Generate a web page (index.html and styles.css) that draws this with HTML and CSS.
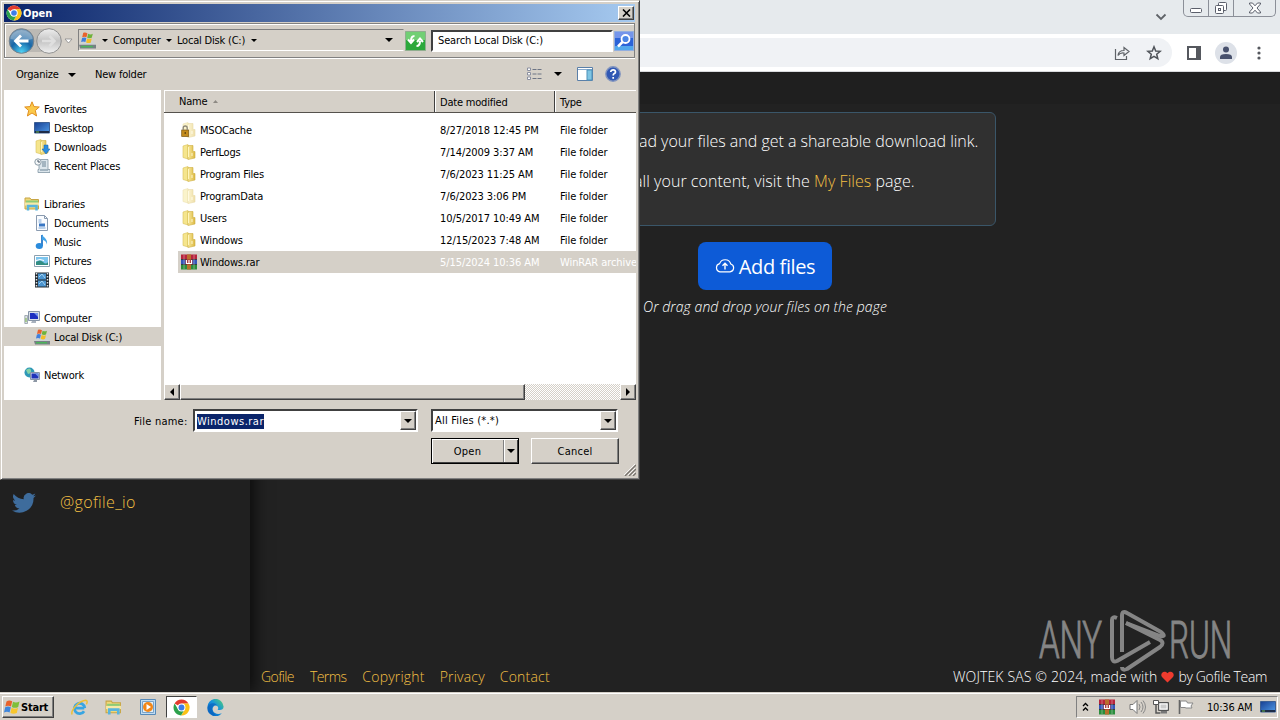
FILE: index.html
```html
<!DOCTYPE html>
<html lang="en">
<head>
  <meta charset="UTF-8">
  <title>Gofile - Open</title>
  <link rel="stylesheet" href="styles.css">
</head>
<body>
  <svg class="sprite" aria-hidden="true">
    <defs>
      <linearGradient id="gFolder" x1="0" x2="1"><stop offset="0" stop-color="#f8e89a"/><stop offset="1" stop-color="#dcb944"/></linearGradient>
      <linearGradient id="gScreen" x1="0" y1="0" x2="1" y2="1"><stop offset="0" stop-color="#173f92"/><stop offset="1" stop-color="#4f9be8"/></linearGradient>
      <radialGradient id="gBack" cx=".5" cy=".95" r=".9"><stop offset="0" stop-color="#4fd3f5"/><stop offset=".5" stop-color="#1767a8"/><stop offset="1" stop-color="#6d94b5"/></radialGradient>
      <linearGradient id="gFwd" x1="0" y1="0" x2="0" y2="1"><stop offset="0" stop-color="#eee"/><stop offset=".5" stop-color="#c4c4c4"/><stop offset="1" stop-color="#f1f1f1"/></linearGradient>
      <linearGradient id="gEdge" x1="0" y1="1" x2="1" y2="0"><stop offset="0" stop-color="#0b5fc0"/><stop offset=".55" stop-color="#1593dd"/><stop offset="1" stop-color="#55d36b"/></linearGradient>
    </defs>
    <symbol id="chrome" viewBox="0 0 16 16">
      <circle cx="8" cy="8" r="7.500" fill="#fff"/>
      <path d="M8 8 1.500 4.200A7.500 7.500 0 0 1 14.500 4.200L8 4.400Z" fill="#e33b2e"/>
      <path d="M14.500 4.200A7.500 7.500 0 0 1 7.600 15.500L11.200 9.800 9 4.200Z" fill="#fbc116"/>
      <path d="M1.500 4.200A7.500 7.500 0 0 0 7.600 15.500L10.600 10.400 5 10Z" fill="#2da14c"/>
      <circle cx="8" cy="8" r="3.700" fill="#fff"/><circle cx="8" cy="8" r="2.800" fill="#3d7de8"/>
    </symbol>
    <symbol id="flag" viewBox="0 0 16 16">
      <path d="M2.500 2.500Q5 .5 8.200 2.200L7 7.500Q4 6 1.300 7.500Z" fill="#e8622c"/><path d="M9 2.800Q12 4.500 15.500 2.500L14.200 8Q11 9.700 7.800 8Z" fill="#7fbf3a"/>
      <path d="M1.200 8.300Q4 6.800 6.800 8.300L5.600 13.500Q3 12 0 13.500Z" fill="#3f86dc"/><path d="M7.600 8.800Q11 10.500 14 8.800L12.800 14Q9.500 15.500 6.400 14Z" fill="#f8c62d"/>
    </symbol>
    <symbol id="disk" viewBox="0 0 16 16">
      <path d="M2.500 9h11L16 12H0Z" fill="#cdd2d4"/><path d="M0 12h16v3.500H1Z" fill="#768084"/><path d="M2 13h11v1.500H2Z" fill="#4bb45b"/>
      <path d="M4 .8Q6 0 8 1.300L7 5Q5 4 3 5Z" fill="#e8622c"/><path d="M8.600 1.700Q11 3 13 1.700L12 5.500Q10 6.500 7.700 5.300Z" fill="#6fb33a"/>
      <path d="M2.900 5.600Q5 4.500 6.900 5.700L6 9.500Q4 8.500 2 9.500Z" fill="#3f7fdc"/><path d="M7.600 6Q10 7.200 12 6.200L11 10Q9 11 6.700 9.800Z" fill="#f2bd27"/>
    </symbol>
    <symbol id="star" viewBox="0 0 16 16"><path d="M8 .8 10 5.600 15.300 6 11.300 9.500 12.600 15 8 12 3.400 15 4.700 9.500.7 6 6 5.600Z" fill="#fbc94a" stroke="#e08f22"/></symbol>
    <symbol id="screen" viewBox="0 0 16 16"><path d="M.5 2.500h15v10.500h-15Z" fill="url(#gScreen)" stroke="#3c5f93"/><path d="M1 11h14v2H1Z" fill="#1d2c48"/><path d="M2 11.500h3v1H2Z" fill="#68b552"/></symbol>
    <symbol id="folder" viewBox="0 0 16 16"><path d="M2 2 7 .5V15L2 13.500Z" fill="#f5e58d" stroke="#d9bf58" stroke-width=".6"/><path d="M7 1.500h5v6H14v6.500L7 15.500Z" fill="url(#gFolder)" stroke="#cfae42" stroke-width=".6"/><path d="M7.500 3v10" stroke="#fff6bd"/><path d="M11 9v3" stroke="#fff8d0"/></symbol>
    <symbol id="lockfolder" viewBox="0 0 16 16"><use href="#folder" opacity=".45"/><rect x=".7" y="8" width="7" height="6.500" fill="#c38b1c" stroke="#7d5713" stroke-width=".7"/><path d="M2.200 8V6a2 2 0 0 1 4 0v2" fill="none" stroke="#8e8878" stroke-width="1.300"/><path d="M4.200 10v2" stroke="#47340e"/></symbol>
    <symbol id="downloads" viewBox="0 0 16 16"><use href="#folder"/><path d="M10 6h4v4h2l-4 5-4-5h2Z" fill="#2b8de0" stroke="#1460ad" stroke-width=".5"/></symbol>
    <symbol id="recent" viewBox="0 0 16 16"><path d="M5 1.500h9v10h2v3H4v-3h1Z" fill="#dce6ec" stroke="#8296a3" stroke-width=".8"/><path d="M8 4h4M8 6h4M8 8h4M6 12h8" stroke="#6c8495"/><circle cx="4" cy="4" r="3.200" fill="#f4f7f8" stroke="#8c9ca8"/><path d="M4 2v2h2" fill="none" stroke="#456"/></symbol>
    <symbol id="library" viewBox="0 0 16 16"><path d="M1 2h5l1 1.500h7.500V13H1Z" fill="#efd778" stroke="#c7a544"/><path d="M2 4.500h12v3H2Z" fill="#8ecb76"/><path d="M1 6.500h14v3H1Z" fill="#f7e9a6"/><path d="M4 14.500v-4.500h8.500v4.500" fill="none" stroke="#58b4dd" stroke-width="2.500"/></symbol>
    <symbol id="doc" viewBox="0 0 16 16"><path d="M2.500.5h8l3 3v12h-11Z" fill="#fafcff" stroke="#8a9bb0"/><path d="M10.500.5v3h3" fill="none" stroke="#8a9bb0"/><path d="M4.500 5h3M4.500 7h3M4.500 13h7" stroke="#7aa6d6"/><path d="M5 8.500h6v3H5Z" fill="#3877c4"/></symbol>
    <symbol id="music" viewBox="0 0 16 16"><path d="M8 1v11" stroke="#2476c8" stroke-width="1.800"/><ellipse cx="5.300" cy="12" rx="3.600" ry="3" fill="#2a8bdc"/><path d="M8 0c1 4 6 4 5 10.500-1-3.500-2.500-4.500-5-4.500Z" fill="#43a4e8"/></symbol>
    <symbol id="picture" viewBox="0 0 16 16"><path d="M.5 2.500h15v11h-15Z" fill="#fff" stroke="#8ba0b0"/><path d="M2 4h12v8H2Z" fill="#7cc5ee"/><path d="M2 9q4-3 7 0t5 0v3H2Z" fill="#328d83"/><path d="M2 7.500q4-2 8 0" stroke="#fff" fill="none"/></symbol>
    <symbol id="video" viewBox="0 0 16 16"><path d="M1 .5h14v15H1Z" fill="#232a30"/><path d="M4 1.500h8v6H4ZM4 8.500h8v6H4Z" fill="#4b94cf"/><path d="M5 5l3-3 3 4M5 12l3-3 3 4" stroke="#a4d2ef" fill="none"/><path d="M2.500 1v14M13.500 1v14" stroke="#dce3e8" stroke-width="1.500" stroke-dasharray="1.500 1.500"/></symbol>
    <symbol id="computer" viewBox="0 0 16 16"><path d="M4.500 1.500h11v9h-11Z" fill="#d9dfe8" stroke="#8795a8"/><path d="M6 3h8v6H6Z" fill="#1c2fc0"/><path d="M10 3h4v4Z" fill="#7193ea"/><path d="M8 11h4v2H7Z" fill="#a9b2be"/><path d="M.8 5.500h2.700v8H.8Z" fill="#dbe0e3" stroke="#84909c" stroke-width=".7"/><path d="M2 8v4" stroke="#79b447"/></symbol>
    <symbol id="network" viewBox="0 0 16 16"><circle cx="5.500" cy="5.500" r="5" fill="#2e98b7"/><path d="M2 3q4-3 5 0t-3 4Z" fill="#85d2a6"/><path d="M6.500 5.500h9v7h-9Z" fill="#d9dfe8" stroke="#8795a8"/><path d="M7.500 6.500h7v5h-7Z" fill="#2033b9"/><path d="M11 6.500h3.500V10Z" fill="#6f93e7"/><path d="M10 13h3v2h-4Z" fill="#8d97a5"/></symbol>
    <symbol id="winrar" viewBox="0 0 16 16"><path d="M0 .5h16v5H0Z" fill="#b7243c"/><path d="M0 5.500h16v5H0Z" fill="#3455b8"/><path d="M0 10.500h16v5H0Z" fill="#2a8d3c"/><path d="M0 5.500h16M0 10.500h16" stroke="#222" stroke-width=".7"/><path d="M3 1v14M13 1v14" stroke="#fff" stroke-width=".7" opacity=".5"/><path d="M6 .5h4v15H6Z" fill="#b8702c"/><path d="M4.500 5.500h7v5h-7Z" fill="#a52a32"/><path d="M5.500 6v3.500h5V6M8 6v3.500" fill="none" stroke="#fff" stroke-width="1.200"/></symbol>
    <symbol id="ie" viewBox="0 0 16 16"><path d="M12.500 8.500H4M13 8.500A4.900 4.900 0 1 0 12.300 11.500" fill="none" stroke="#38a5e2" stroke-width="2.600"/><path d="M1 14.500C-.5 10 8 1.500 14 1.200c2 .2 1 2.800.5 3.800" fill="none" stroke="#edbf35" stroke-width="1.400"/></symbol>
    <symbol id="player" viewBox="0 0 16 16"><path d="M.5.500h15v15H.5Z" fill="#c0dcf2" stroke="#568ab9"/><path d="M2.500 2.500h11v11h-11Z" fill="#e3eff7" stroke="#7aa3c7"/><circle cx="8" cy="8" r="5" fill="#f28718"/><path d="M6.500 5v6l4.500-3Z" fill="#fff"/></symbol>
    <symbol id="edge" viewBox="0 0 16 16"><path d="M.4 8A7.600 7.600 0 0 1 15.600 7c.2 3-3 4-5.600 3 1.500-1.500 0-4-2-4-3 .2-4 5-.5 7.200 2 1.200 4.500 1 6.500 0A7.600 7.600 0 0 1 .4 8Z" fill="url(#gEdge)"/><path d="M.6 8C1 4 7 2.500 9.500 6 6 5 4 8 5 11c.5 2 2 3.500 4 4.500C4 16 .4 12 .6 8Z" fill="#0c64bd" opacity=".75"/></symbol>
  </svg>

  <div class="desktop">
    <div class="browser">
      <div class="tab-strip">
        <svg class="tab-search" width="12" height="8" viewBox="0 0 12 8"><path d="M1.500 1.500 6 6l4.500-4.500" fill="none" stroke="#5f6368" stroke-width="1.800"/></svg>
        <div class="window-controls">
          <span class="control"><svg width="14" height="8" viewBox="0 0 14 8"><rect x="1.500" y="2.500" width="11" height="4" rx="1" fill="#fff" stroke="#5b5f6b"/></svg></span>
          <span class="control"><svg width="14" height="14" viewBox="0 0 14 14"><rect x="4.500" y="1.500" width="8" height="8" rx="1" fill="#fff" stroke="#5b5f6b"/><rect x="1.500" y="4.500" width="8" height="8" rx="1" fill="#fff" stroke="#5b5f6b"/><rect x="4.500" y="7.500" width="2" height="2" fill="none" stroke="#5b5f6b"/></svg></span>
          <span class="control wide"><svg width="14" height="12" viewBox="0 0 14 12"><path d="M1.500 1h3L7 3.800 9.500 1h3v1L9 6l3.500 4v1h-3L7 8.200 4.500 11h-3v-1L5 6 1.500 2Z" fill="#fff" stroke="#5b5f6b"/></svg></span>
        </div>
      </div>
      <div class="browser-bar">
        <div class="omnibox">
          <svg width="16" height="16" viewBox="0 0 16 16"><path d="M1.500 4v10.500h11V11M4 10.500q.5-5 6-5V2.500l5 4-5 4V8Q6 7.500 4 10.500Z" fill="none" stroke="#5f6368" stroke-width="1.200"/></svg>
          <svg width="16" height="16" viewBox="0 0 16 16"><path d="M8 1.800 9.700 6l4.500.3-3.500 2.900 1.100 4.500L8 11.300l-3.800 2.400 1.100-4.500L1.800 6.300 6.300 6Z" fill="none" stroke="#50545a" stroke-width="1.500"/></svg>
        </div>
        <svg width="14" height="14" viewBox="0 0 14 14"><path d="M1 1h12v12H1Z" fill="#fff" stroke="#55585e" stroke-width="2"/><path d="M9 0h5v14H9Z" fill="#55585e"/></svg>
        <span class="profile"><svg width="14" height="14" viewBox="0 0 14 14"><circle cx="7" cy="3.500" r="3" fill="#48516d"/><path d="M1 13v-2q0-3 6-3t6 3v2Z" fill="#48516d"/></svg></span>
        <svg width="4" height="14" viewBox="0 0 4 14"><g fill="#55585e"><circle cx="2" cy="2" r="1.600"/><circle cx="2" cy="7" r="1.600"/><circle cx="2" cy="12" r="1.600"/></g></svg>
      </div>
      <div class="page">
        <aside class="sidebar">
          <svg width="24" height="20" viewBox="0 0 24 20"><path d="M24 2.400a10 10 0 0 1-2.800.8A5 5 0 0 0 23.300.5a10 10 0 0 1-3.100 1.200 4.900 4.900 0 0 0-8.400 4.500A14 14 0 0 1 1.700 1a4.900 4.900 0 0 0 1.500 6.600A5 5 0 0 1 1 7v.1a4.900 4.900 0 0 0 4 4.800 5 5 0 0 1-2.200.1 4.900 4.900 0 0 0 4.600 3.400A9.900 9.900 0 0 1 0 17.500 14 14 0 0 0 21.500 5Z" fill="#3e6c9c"/></svg>
          <a class="handle">@gofile_io</a>
        </aside>
        <main class="main">
          <div class="page-head"></div>
          <div class="notice">
            <p class="line-one">ad your files and get a shareable download link.</p>
            <p class="line-two">all your content, visit the <a>My Files</a> page.</p>
          </div>
          <button class="add-files">
            <svg width="20" height="14" viewBox="0 0 20 14"><path d="M5 12.800h10a4 4 0 0 0 .8-7.800A5.900 5.900 0 0 0 4.600 4.600 4.200 4.200 0 0 0 5 12.800Z" fill="none" stroke="#fff" stroke-width="1.200"/><path d="M10 10.500V4.500M7.500 6.800 10 4.300l2.500 2.500" fill="none" stroke="#fff" stroke-width="1.400"/></svg>
            <span>Add files</span>
          </button>
          <p class="drop-hint">Or drag and drop your files on the page</p>
          <div class="watermark">
            <svg width="196" height="64" viewBox="0 0 196 64">
              <g fill="#858585" stroke="#858585" stroke-width="1" font-family="Roboto" font-size="52">
                <text x="1" y="50" textLength="63" lengthAdjust="spacingAndGlyphs">ANY</text>
                <text x="131" y="50" textLength="63" lengthAdjust="spacingAndGlyphs">RUN</text>
              </g>
              <g fill="none" stroke="#858585" stroke-width="4" stroke-linejoin="round">
                <path d="M79 10q-5-2-5 2v37q0 6 5 4L112 34"/>
                <path d="M84 44V8q0-6 5-3l34 19q6 5-1 4L88 15"/>
                <path d="M84 59q0 4 5 2l33-22q5-4 0-7L88 15"/>
              </g>
            </svg>
          </div>
          <footer class="footer">
            <nav><a class="tight">Gofile</a><a class="tight">Terms</a><a>Copyright</a><a>Privacy</a><a>Contact</a></nav>
            <div class="credits"><span class="made">WOJTEK SAS © 2024, made with</span>
              <svg width="13" height="12" viewBox="0 0 13 12"><path d="M6.500 11.500 1 6C-1.500 2.500 3-1.500 6.500 2.200 10-1.500 14.500 2.500 12 6Z" fill="#ee3b2e"/></svg>
              <span class="team">by Gofile Team</span></div>
          </footer>
        </main>
      </div>
    </div>

    <div class="taskbar">
      <button class="start"><svg width="16" height="16"><use href="#flag"/></svg><span>Start</span></button>
      <div class="quick">
        <span><svg width="17" height="17"><use href="#ie"/></svg></span>
        <span><svg width="17" height="17"><use href="#library"/></svg></span>
        <span><svg width="16" height="16"><use href="#player"/></svg></span>
        <span class="active"><svg width="17" height="17"><use href="#chrome"/></svg></span>
        <span><svg width="17" height="17"><use href="#edge"/></svg></span>
      </div>
      <div class="tray">
        <svg class="more" width="7" height="10" viewBox="0 0 7 10"><path d="M1 4 3.500 1.500 6 4M1 8.500 3.500 6 6 8.500" fill="none" stroke="#000" stroke-width="1.300"/></svg>
        <svg class="rar" width="16" height="16"><use href="#winrar"/></svg>
        <svg class="sound" width="17" height="16" viewBox="0 0 17 16"><path d="M1 5.500h3L8 1.500v13l-4-4H1Z" fill="#fff" stroke="#777"/><path d="M10 5q2 3 0 6M12 3q4 5 0 10M14 1.500q5 6.500 0 13" fill="none" stroke="#888"/></svg>
        <svg class="net" width="17" height="16" viewBox="0 0 17 16"><path d="M5.500 3.500h10v8h-10Z" fill="#bbb" stroke="#555"/><path d="M7 5h7v5H7Z" fill="#ccc" stroke="#fff"/><path d="M8 12h6v2.500H7Z" fill="#777"/><path d="M.5 1.500h5v4h-5Z" fill="#fff" stroke="#555"/><path d="M3 5.500V14h4" fill="none" stroke="#555" stroke-width="1.500"/></svg>
        <svg class="alert" width="16" height="16" viewBox="0 0 16 16"><path d="M1.500 1v14" stroke="#666" stroke-width="1.600"/><path d="M2.500 2h6l1 2H15l-2 3 1 2H8L7 8.500H2.500Z" fill="#fff" stroke="#888"/></svg>
        <span class="clock">10:36 AM</span>
        <svg width="16" height="16"><use href="#screen"/></svg>
      </div>
    </div>

    <div class="dialog">
      <div class="title-bar"><svg width="16" height="16"><use href="#chrome"/></svg><b>Open</b>
        <span class="close"><svg width="9" height="8" viewBox="0 0 9 8"><path d="m1 .5 7 7M8 .5l-7 7" stroke="#000" stroke-width="1.600"/></svg></span></div>
      <div class="nav-bar">
        <svg class="arrows" width="68" height="28" viewBox="0 0 68 28">
          <path d="M14 2h26v23H14Z" fill="#bcb9b4"/>
          <circle cx="14.500" cy="14" r="12.300" fill="url(#gBack)" stroke="#77828c"/><path d="M3.500 12a11 9 0 0 1 22 0q-11 3-22 0Z" fill="#fff" opacity=".28"/>
          <path d="M21.500 14H9M14 8.500 8.500 14l5.500 5.500" fill="none" stroke="#fff" stroke-width="2.800"/>
          <circle cx="42" cy="14" r="12.300" fill="url(#gFwd)" stroke="#909090"/><path d="M35 14h12M42.500 9l5 5-5 5" fill="none" stroke="#dfdfdf" stroke-width="2.500"/>
          <path d="M58 12h7l-3.500 4Z" fill="#fff" stroke="#888" stroke-width=".8"/>
        </svg>
        <div class="address">
          <svg width="17" height="17"><use href="#disk"/></svg>
          <i class="caret"></i><span class="crumb">Computer</span><i class="caret"></i><span class="crumb disk">Local Disk (C:)</span><i class="caret"></i>
          <i class="caret big last"></i>
        </div>
        <svg class="refresh" width="21" height="20" viewBox="0 0 21 20"><path d="M.5.500h20v19H.5Z" fill="#2ba83b" stroke="#8fae8e"/><path d="M1 1h19v8H1Z" fill="#71cf74"/><path d="M9.500 5Q6 5 6 10M3 8.500 6 12l3-3.500M11.500 15Q15 15 15 10M12 11l3-3.500 3 3.500" fill="none" stroke="#fff" stroke-width="2"/></svg>
        <div class="search">Search Local Disk (C:)</div>
        <svg class="search-go" width="20" height="20" viewBox="0 0 20 20"><path d="M.5.500h19v19H.5Z" fill="#2b63d7" stroke="#92aedf"/><path d="M1 1h18v6H1Z" fill="#7595ea"/><path d="M1 15h18v4H1Z" fill="#51a8ec"/><circle cx="11.500" cy="8" r="4" fill="#4c86e5" stroke="#fff" stroke-width="1.800"/><path d="M8.500 11 4 15.500" stroke="#fff" stroke-width="2.500"/></svg>
      </div>
      <div class="tool-bar">
        <span class="organize">Organize</span><i class="caret big"></i><span class="new-folder">New folder</span>
        <div class="views">
          <svg width="15" height="14" viewBox="0 0 15 14"><path d="M.5 1h3v2.500h-3ZM.5 5.500h3V8h-3ZM.5 10h3v2.500h-3Z" fill="#fff" stroke="#8a8fa0"/><path d="M5.500 2.500H15M5.500 7H15M5.500 11.500H15" stroke="#6d7484" stroke-dasharray="4 1"/></svg>
          <i class="caret big"></i>
          <svg class="preview" width="16" height="14" viewBox="0 0 16 14"><path d="M.5.500h15v13H.5Z" fill="#fff" stroke="#5a7fa8"/><path d="M1 2.500h14" stroke="#86a7cb"/><path d="M10 3h5v10h-5Z" fill="#7fc5e3" stroke="#4d91b9"/></svg>
          <svg width="16" height="16" viewBox="0 0 16 16"><circle cx="8" cy="8" r="7.200" fill="#3158b4" stroke="#8295bf" stroke-width="1.400"/><path d="M5.700 6Q6 3.800 8.200 3.800T10.500 6Q10.500 7 9 7.800 8.200 8.300 8.200 9.500M8.200 11v1.700" fill="none" stroke="#fff" stroke-width="1.700"/></svg>
        </div>
      </div>
      <div class="body">
        <div class="tree">
          <div class="node root"><svg width="16" height="16"><use href="#star"/></svg><span>Favorites</span></div>
          <div class="node"><svg width="16" height="16"><use href="#screen"/></svg><span>Desktop</span></div>
          <div class="node"><svg width="16" height="16"><use href="#downloads"/></svg><span>Downloads</span></div>
          <div class="node"><svg width="16" height="16"><use href="#recent"/></svg><span>Recent Places</span></div>
          <div class="node root section"><svg width="16" height="16"><use href="#library"/></svg><span>Libraries</span></div>
          <div class="node"><svg width="16" height="16"><use href="#doc"/></svg><span>Documents</span></div>
          <div class="node"><svg width="16" height="16"><use href="#music"/></svg><span>Music</span></div>
          <div class="node"><svg width="16" height="16"><use href="#picture"/></svg><span>Pictures</span></div>
          <div class="node"><svg width="16" height="16"><use href="#video"/></svg><span>Videos</span></div>
          <div class="node root section"><svg width="16" height="16"><use href="#computer"/></svg><span>Computer</span></div>
          <div class="node selected"><svg width="16" height="16"><use href="#disk"/></svg><span>Local Disk (C:)</span></div>
          <div class="node root section"><svg width="16" height="16"><use href="#network"/></svg><span>Network</span></div>
        </div>
        <div class="files">
          <div class="file-head"><span class="col-name">Name <svg width="5" height="3" viewBox="0 0 5 3"><path d="M2.500 0 5 3H0Z" fill="#8d8983"/></svg></span><span>Date modified</span><span>Type</span></div>
          <div class="rows">
            <div class="row"><svg width="16" height="16"><use href="#lockfolder"/></svg><span>MSOCache</span><span>8/27/2018 12:45 PM</span><span>File folder</span></div>
            <div class="row"><svg width="16" height="16"><use href="#folder"/></svg><span>PerfLogs</span><span>7/14/2009 3:37 AM</span><span>File folder</span></div>
            <div class="row"><svg width="16" height="16"><use href="#folder"/></svg><span>Program Files</span><span>7/6/2023 11:25 AM</span><span>File folder</span></div>
            <div class="row"><svg class="faded" width="16" height="16"><use href="#folder"/></svg><span>ProgramData</span><span>7/6/2023 3:06 PM</span><span>File folder</span></div>
            <div class="row"><svg width="16" height="16"><use href="#folder"/></svg><span>Users</span><span>10/5/2017 10:49 AM</span><span>File folder</span></div>
            <div class="row"><svg width="16" height="16"><use href="#folder"/></svg><span>Windows</span><span>12/15/2023 7:48 AM</span><span>File folder</span></div>
            <div class="row selected"><svg width="16" height="16"><use href="#winrar"/></svg><span>Windows.rar</span><span>5/15/2024 10:36 AM</span><span>WinRAR archive</span></div>
          </div>
          <div class="scrollbar"><span class="raised arrow"><i class="tri left"></i></span><span class="raised thumb"></span><span class="track"></span><span class="raised arrow"><i class="tri right"></i></span></div>
        </div>
      </div>
      <div class="bottom">
        <div class="fields">
          <label>File name:</label>
          <div class="combo name"><mark>Windows.rar</mark><span class="raised drop"><i class="caret big"></i></span></div>
          <div class="combo type"><span>All Files (*.*)</span><span class="raised drop"><i class="caret big"></i></span></div>
        </div>
        <div class="buttons">
          <button class="open"><span>Open</span><span class="split"><i class="caret big"></i></span></button>
          <button class="cancel">Cancel</button>
        </div>
      </div>
      <svg class="grip" width="12" height="12" viewBox="0 0 12 12"><path d="m1 12 11-11M5 12l7-7M9 12l3-3" stroke="#77736d" stroke-width="1.400"/><path d="m0 11 11-11M4 11l7-7M8 11l3-3" stroke="#fff" stroke-width=".8"/></svg>
    </div>
  </div>
</body>
</html>
```
FILE: styles.css
```css
* {
  box-sizing: border-box;
}
body {
  margin: 0;
  overflow: hidden;
  font-family: "DejaVu Sans Condensed", "DejaVu Sans", sans-serif;
  font-size: 11px;
  letter-spacing: -0.2px;
  color: #000;
}
p {
  margin: 0;
}
svg {
  display: block;
  flex: none;
}
button {
  font: inherit;
  letter-spacing: inherit;
  padding: 0;
  border: 0;
}
.sprite {
  position: absolute;
  width: 0;
  height: 0;
}
.desktop {
  position: relative;
  width: 1280px;
  height: 720px;
  display: flex;
  flex-direction: column;
}

/* browser */
.browser {
  height: 692px;
  display: flex;
  flex-direction: column;
}
.tab-strip {
  height: 34px;
  background: #e6eaed;
  display: flex;
  justify-content: flex-end;
  padding-right: 4px;
}
.tab-search {
  margin: 13px 16px 0 0;
}
.window-controls {
  display: flex;
  height: 17px;
  border: 1px solid #8b8f98;
  border-top: 0;
  border-radius: 0 0 5px 5px;
}
.control {
  width: 25px;
  display: flex;
  align-items: center;
  justify-content: center;
  border-right: 1px solid #8b8f98;
}
.control:first-child {
  padding-top: 4px;
}
.control.wide {
  width: 41px;
  border-right: 0;
}
.browser-bar {
  height: 38px;
  background: #fff;
  border-bottom: 1px solid #d8dadd;
  display: flex;
  align-items: center;
  padding-right: 19px;
}
.omnibox {
  flex: 1;
  height: 29px;
  margin-right: 15px;
  border-radius: 0 15px 15px 0;
  background: #f0f2f5;
  display: flex;
  align-items: center;
  justify-content: flex-end;
  gap: 16px;
  padding-right: 10px;
}
.profile {
  width: 22px;
  height: 22px;
  margin: 0 20px 0 14px;
  border-radius: 50%;
  background: #dde1e8;
  display: flex;
  align-items: center;
  justify-content: center;
}
.page {
  flex: 1;
  display: flex;
  background: #222;
  color: #fff;
  font-family: "Open Sans", sans-serif;
  font-size: 16px;
  font-weight: 300;
}
.page a {
  color: #f5c044;
}
.sidebar {
  width: 250px;
  background: #202020;
  box-shadow: 3px 0 16px rgba(0, 0, 0, 0.75);
  display: flex;
  align-items: flex-start;
  padding: 421px 0 0 12px;
}
.handle {
  margin: -2px 0 0 24px;
  line-height: 22px;
  font-size: 16px;
  letter-spacing: 0.35px;
}
.main {
  flex: 1;
  display: flex;
  flex-direction: column;
  align-items: center;
}
.page-head {
  width: 100%;
  height: 32px;
  background: #1f1f1f;
}
.notice {
  width: 462px;
  height: 114px;
  margin-top: 8px;
  background: #303030;
  border: 1px solid #3a5669;
  border-radius: 6px;
  padding: 16px 0 0 104px;
  white-space: nowrap;
}
.notice p {
  line-height: 24px;
  letter-spacing: -0.02px;
}
.notice .line-two {
  margin: 16px 0 0 -5px;
  letter-spacing: 0.05px;
}
.add-files {
  width: 134px;
  height: 48px;
  margin-top: 16px;
  border-radius: 8px;
  background: #0d5bd7;
  color: #fff;
  display: flex;
  align-items: center;
  justify-content: center;
  gap: 4px;
  font-size: 20px;
  font-weight: 400;
  letter-spacing: -0.4px;
}
.drop-hint {
  margin: 6px 0 0;
  line-height: 22px;
  font-size: 14px;
  font-style: italic;
  letter-spacing: 0.08px;
}
.watermark {
  margin: auto 46px 0 auto;
}
.watermark svg {
  overflow: visible;
}
.footer {
  width: 100%;
  height: 31px;
  margin-top: -11px;
  padding: 0 13px 0 11px;
  display: flex;
  justify-content: space-between;
  align-items: center;
  font-size: 14px;
}
.footer nav {
  display: flex;
  gap: 15px;
  letter-spacing: 0.2px;
}
.footer .tight {
  letter-spacing: -0.6px;
  margin-right: 1px;
}
.credits {
  display: flex;
  align-items: center;
  gap: 4px;
  letter-spacing: 0.15px;
}
.team {
  letter-spacing: -0.35px;
}

/* taskbar */
.taskbar {
  height: 28px;
  background: #d5d0c8;
  border-top: 1px solid #d5d0c8;
  box-shadow: inset 0 1px #fff;
  display: flex;
  padding: 3px 2px 2px;
}
.start,
.raised,
.close,
.cancel {
  background: #d5d0c8;
  border: 1px solid;
  border-color: #fff #404040 #404040 #fff;
  box-shadow: inset -1px -1px #808080;
}
.start {
  width: 52px;
  height: 22px;
  display: flex;
  align-items: center;
  gap: 1px;
  padding-left: 1px;
  font-weight: bold;
}
.quick {
  display: flex;
  margin-left: 10px;
}
.quick span {
  width: 31px;
  margin-right: 3px;
  display: flex;
  align-items: center;
  justify-content: center;
}
.quick .active {
  background: #fff;
  border: 1px solid;
  border-color: #404040 #fff #fff #404040;
}
.tray {
  width: 202px;
  margin-left: auto;
  border: 1px solid;
  border-color: #808080 #fff #fff #808080;
  display: flex;
  align-items: center;
  padding-left: 5px;
}
.rar {
  margin-left: 10px;
}
.sound {
  margin-left: 14px;
}
.net {
  margin-left: 7px;
}
.alert {
  margin-left: 8px;
}
.clock {
  width: 47px;
  margin: 0 6px 0 13px;
  white-space: nowrap;
}

/* file dialog, sits over the browser */
.dialog {
  position: absolute;
  left: 0;
  top: 0;
  width: 640px;
  height: 480px;
  background: #d5d0c8;
  border: 1px solid;
  border-color: #d5d0c8 #404040 #404040 #d5d0c8;
  box-shadow: inset 1px 1px #fff, inset -1px -1px #808080;
  padding: 3px 3px 0 3px;
}
.title-bar {
  height: 18px;
  width: 631px;
  background: linear-gradient(90deg, #0a246a, #a6caf0);
  color: #fff;
  display: flex;
  align-items: center;
  padding: 0 1px 0 2px;
  gap: 1px;
}
.title-bar b {
  letter-spacing: 0;
}
.close {
  width: 16px;
  height: 14px;
  margin-left: auto;
  display: flex;
  align-items: center;
  justify-content: center;
}
.nav-bar {
  height: 35px;
  width: 631px;
  margin-top: 1px;
  border: 1px solid #808080;
  box-shadow: inset 1px 1px #fff, 0 1px #fff;
  display: flex;
  align-items: center;
}
.arrows {
  margin-left: 2px;
}
.address {
  width: 326px;
  height: 22px;
  margin: -1px 0 0 3px;
  border: 1px solid;
  border-color: #808080 #d5d0c8 #fff #808080;
  display: flex;
  align-items: center;
}
.caret {
  width: 0;
  height: 0;
  border: 3px solid transparent;
  border-top: 3px solid #000;
  border-bottom: 0;
  margin: 0 5px 0 6px;
}
.caret.big {
  border-width: 4px 4px 0;
  margin: 0;
}
.caret.last {
  margin-left: auto;
  margin-right: 10px;
}
.crumb {
  white-space: nowrap;
  width: 47px;
}
.crumb.disk {
  width: 68px;
}
.crumb + .caret {
  margin: 0 5px 0 6px;
}
.refresh {
  margin-left: 1px;
}
.search {
  width: 182px;
  height: 22px;
  margin: 0 1px 0 5px;
  border: 2px solid;
  border-color: #404040 #fff #fff #404040;
  background: #fff;
  padding-left: 5px;
  line-height: 18px;
  letter-spacing: -0.15px;
}
.tool-bar {
  height: 30px;
  display: flex;
  align-items: center;
  padding: 0 0 1px 12px;
  margin-top: 2px;
}
.organize {
  width: 52px;
}
.new-folder {
  margin-left: 19px;
}
.views {
  margin: 0 15px 2px auto;
  display: flex;
  align-items: center;
  gap: 12px;
}
.views .preview {
  margin-left: 3px;
}
.body {
  height: 310px;
  display: flex;
  background: #fff;
}
.tree {
  width: 157px;
  padding-top: 9px;
}
.node {
  height: 19px;
  padding-left: 30px;
  display: flex;
  align-items: center;
  gap: 4px;
}
.node span {
  padding-top: 2px;
}
.node.root {
  padding-left: 20px;
}
.node.section {
  margin-top: 19px;
}
.selected {
  background: #d5d0c8;
}
.files {
  flex: 1;
  min-width: 0;
  border-left: 3px solid #d5d0c8;
  display: flex;
  flex-direction: column;
}
.file-head,
.row {
  display: grid;
  grid-template-columns: 271px 120px 1fr;
  align-items: center;
}
.file-head {
  height: 23px;
  background: #d5d0c8;
  border-top: 1px solid #fff;
  border-bottom: 1px solid #55524d;
}
.file-head > span {
  height: 21px;
  line-height: 23px;
  border-right: 1px solid #404040;
  box-shadow: inset 1px 0 #fff;
  padding-left: 5px;
}
.file-head > span:last-child {
  border-right: 0;
}
.file-head .col-name {
  padding-left: 15px;
  display: flex;
  align-items: center;
  gap: 6px;
}
.rows {
  padding: 6px 0 0 14px;
}
.row {
  grid-template-columns: 22px 240px 120px 1fr;
  height: 22px;
  white-space: nowrap;
  overflow: hidden;
}
.row svg {
  margin-left: 3px;
}
.row span:nth-child(3),
.row span:nth-child(4) {
  letter-spacing: -0.08px;
}
.row.selected span:nth-child(n + 3) {
  color: #fff;
}
.faded {
  opacity: 0.45;
}
.scrollbar {
  height: 16px;
  margin-top: auto;
  display: flex;
}
.arrow {
  width: 16px;
  display: flex;
  align-items: center;
  justify-content: center;
}
.thumb {
  width: 345px;
}
.track {
  flex: 1;
  background: repeating-conic-gradient(#fff 0 25%, #d5d0c8 0 50%) 0 0 / 2px 2px;
}
.tri {
  border: 4px solid transparent;
}
.tri.left {
  border-left: 0;
  border-right-color: #000;
}
.tri.right {
  border-right: 0;
  border-left-color: #000;
}
.bottom {
  padding: 9px 17px 0 0;
}
.fields {
  display: flex;
  align-items: center;
  justify-content: flex-end;
  margin-right: 1px;
}
.fields label {
  width: 59px;
  padding-top: 1px;
  letter-spacing: 0.25px;
  white-space: nowrap;
}
.combo {
  height: 23px;
  background: #fff;
  border: 2px solid;
  border-color: #404040 #fff #fff #404040;
  display: flex;
  align-items: center;
  padding-left: 2px;
}
.combo.name {
  width: 225px;
}
.combo.type {
  width: 187px;
  margin-left: 13px;
  letter-spacing: 0.2px;
}
.combo mark {
  margin-top: 1px;
  background: #0a246a;
  color: #fff;
  line-height: 15px;
  letter-spacing: 0.5px;
}
.drop {
  width: 16px;
  height: 19px;
  margin-left: auto;
  display: flex;
  align-items: center;
  justify-content: center;
}
.buttons {
  margin-top: 6px;
  display: flex;
  justify-content: flex-end;
  gap: 12px;
}
.buttons button {
  width: 88px;
  height: 26px;
  letter-spacing: 0.25px;
}
.open {
  background: #d5d0c8;
  border: 1px solid #000;
  box-shadow: inset 1px 1px #fff, inset -1px -1px #404040;
  display: flex;
  align-items: center;
}
.open > span:first-child {
  flex: 1;
}
.split {
  width: 15px;
  height: 22px;
  border-left: 1px solid #808080;
  box-shadow: inset 1px 0 #fff;
  display: flex;
  align-items: center;
  justify-content: center;
}
.grip {
  position: absolute;
  right: 3px;
  bottom: 3px;
}
```
